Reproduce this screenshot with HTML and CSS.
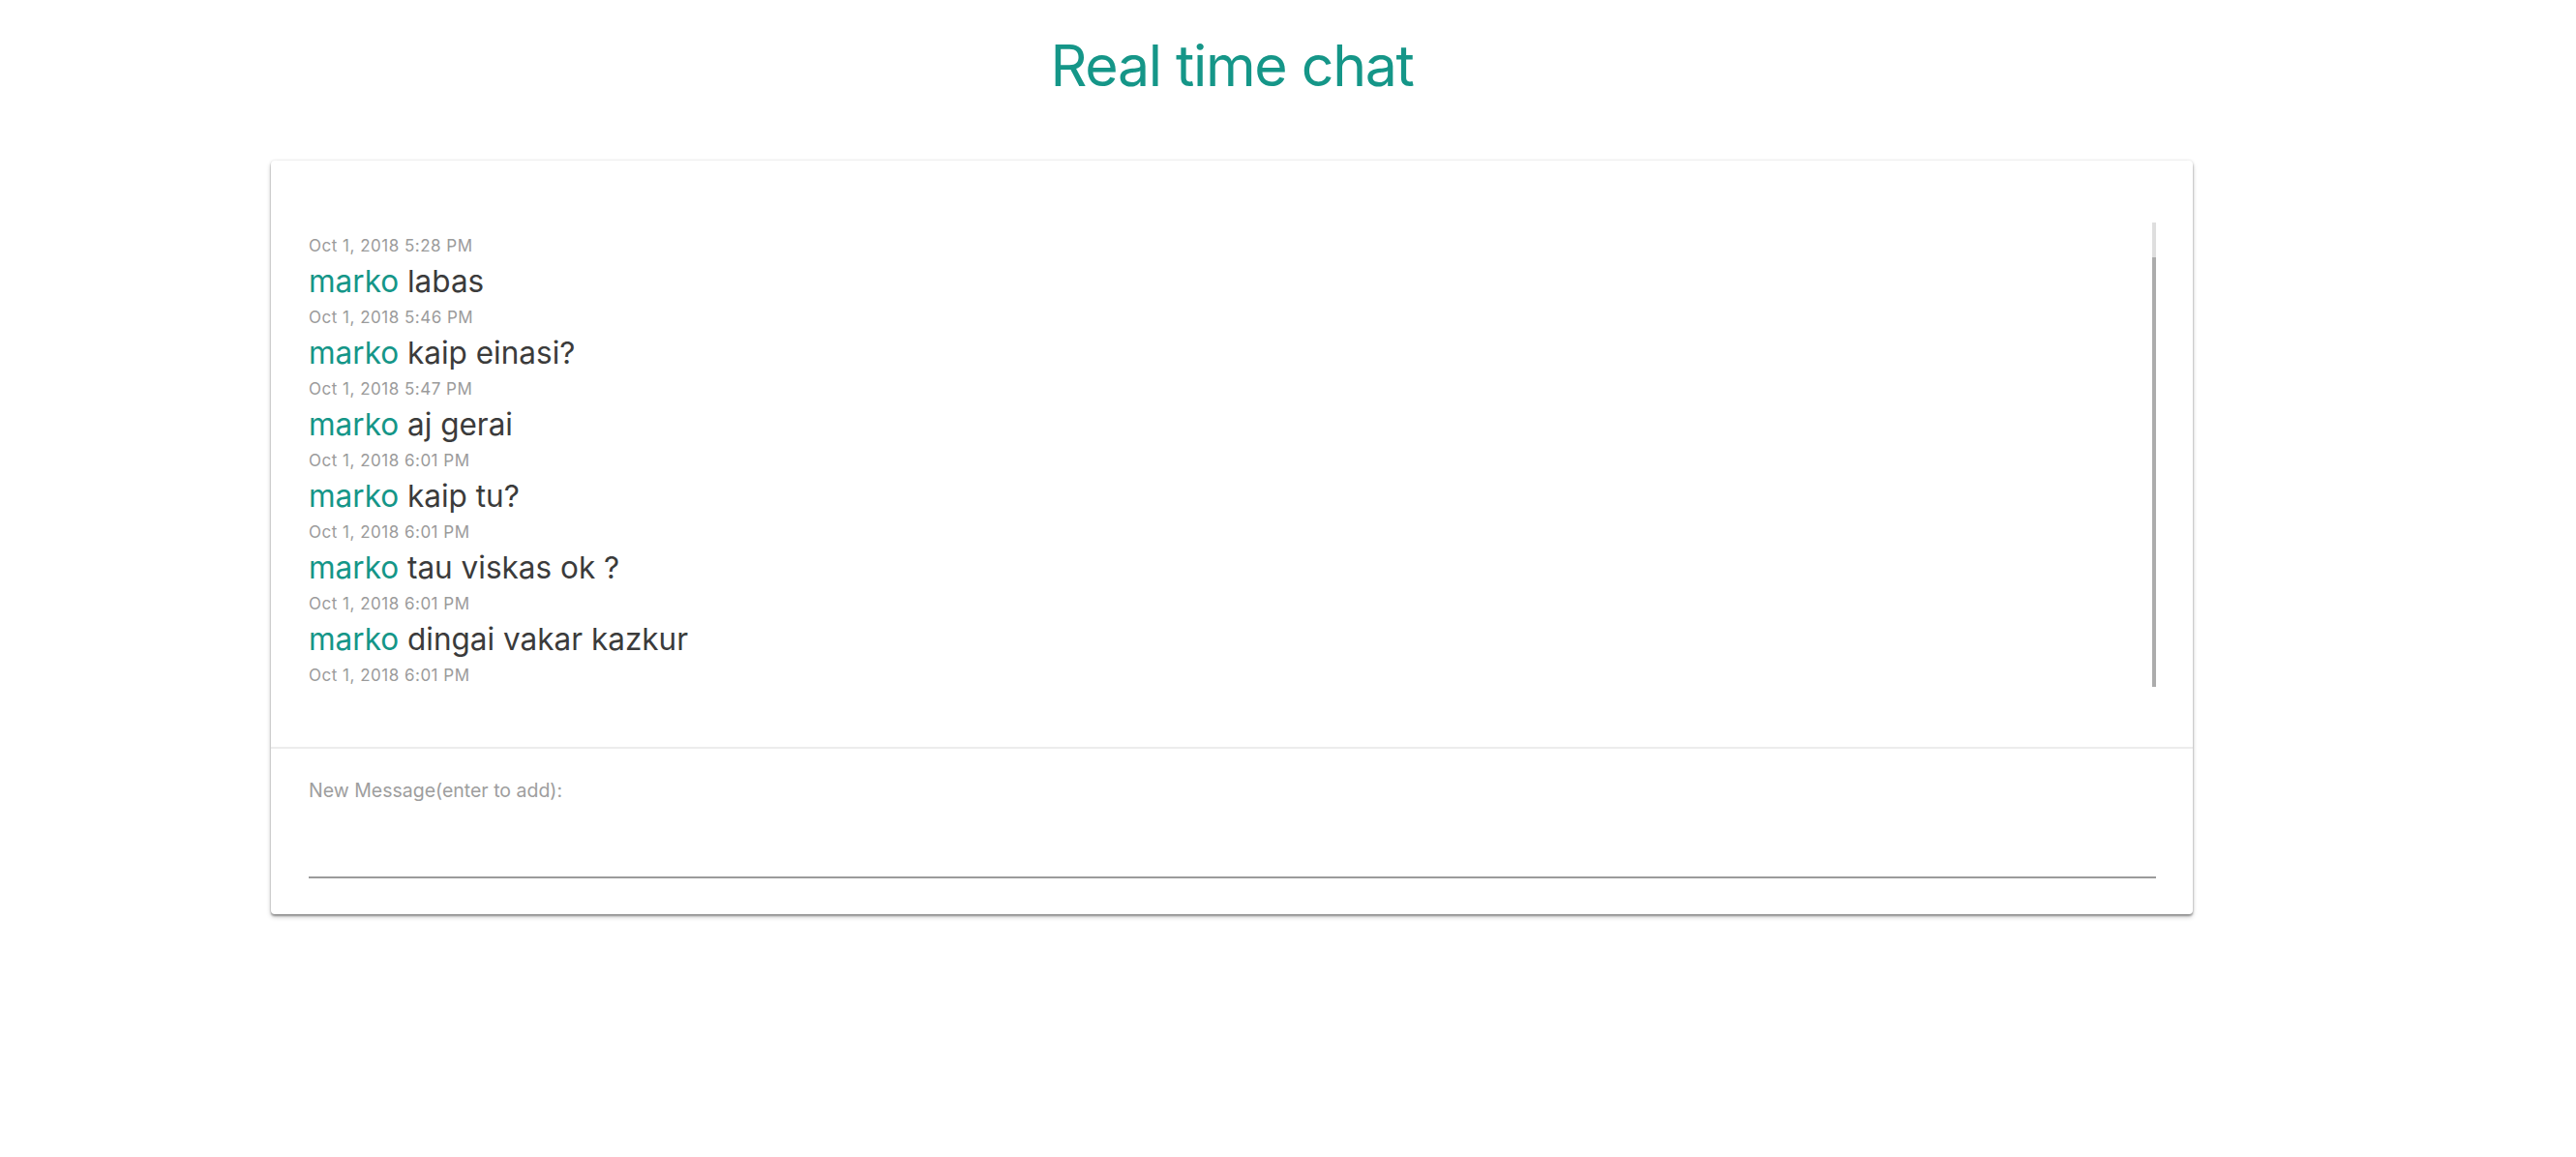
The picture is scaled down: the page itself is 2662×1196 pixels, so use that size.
FILE: index.html
```html
<!DOCTYPE html>
<html lang="en">
<head>
<meta charset="utf-8">
<title>Real time chat</title>
<link rel="stylesheet" href="styles.css">
</head>
<body>
<div class="page">
  <h1 class="title">Real time chat</h1>
  <div class="card">
    <div class="messages-section">
      <div class="messages">
        <div class="time">Oct 1, 2018 5:28 PM</div>
        <div class="message">
          <div class="line"><span class="user">marko</span> <span class="text">labas</span></div>
          <div class="time">Oct 1, 2018 5:46 PM</div>
        </div>
        <div class="message">
          <div class="line"><span class="user">marko</span> <span class="text">kaip einasi?</span></div>
          <div class="time">Oct 1, 2018 5:47 PM</div>
        </div>
        <div class="message">
          <div class="line"><span class="user">marko</span> <span class="text">aj gerai</span></div>
          <div class="time">Oct 1, 2018 6:01 PM</div>
        </div>
        <div class="message">
          <div class="line"><span class="user">marko</span> <span class="text">kaip tu?</span></div>
          <div class="time">Oct 1, 2018 6:01 PM</div>
        </div>
        <div class="message">
          <div class="line"><span class="user">marko</span> <span class="text">tau viskas ok ?</span></div>
          <div class="time">Oct 1, 2018 6:01 PM</div>
        </div>
        <div class="message">
          <div class="line"><span class="user">marko</span> <span class="text">dingai vakar kazkur</span></div>
          <div class="time">Oct 1, 2018 6:01 PM</div>
        </div>
        <div class="scrollbar"><div class="scrollbar-thumb"></div></div>
      </div>
    </div>
    <div class="composer">
      <label class="label" for="msg">New Message(enter to add):</label>
      <input class="input" id="msg" type="text">
    </div>
  </div>
</div>
</body>
</html>
```

FILE: styles.css
```css
html, body {
  margin: 0;
  padding: 0;
  background: #ffffff;
}

body {
  font-family: Inter, "Noto Sans", "Liberation Sans", sans-serif;
}

.page {
  width: 2546px;
  padding-bottom: 60px;
}

.title {
  margin: 0;
  padding-top: 32px;
  font-size: 59px;
  line-height: 72px;
  letter-spacing: -1.3px;
  font-weight: 400;
  color: #159688;
  text-align: center;
}

.card {
  width: 1986px;
  margin: 62px auto 0;
  background: #fff;
  border-radius: 4px;
  box-shadow: 0 2px 2px rgba(0, 0, 0, 0.3), 0 3px 5px rgba(0, 0, 0, 0.2), 0 0 3px rgba(0, 0, 0, 0.12);
}

.messages-section {
  padding: 64px 38px 62px 39px;
  border-bottom: 2px solid #ececec;
}

.messages {
  position: relative;
  height: 480px;
  box-sizing: border-box;
  padding-top: 13px;
}

.scrollbar {
  position: absolute;
  top: 0;
  right: 0;
  bottom: 0;
  width: 4px;
  background: #dedede;
  display: flex;
  flex-direction: column;
  justify-content: flex-end;
}

.scrollbar-thumb {
  height: 444px;
  background: #acacac;
}

.message .line {
  font-size: 31.5px;
  line-height: 52px;
  color: #3b3b3b;
  white-space: nowrap;
}

.user {
  color: #159688;
}

.time {
  font-size: 17px;
  line-height: 22px;
  color: #9b9b9b;
  letter-spacing: 0.5px;
}

.composer {
  padding: 31px 38px 37px 39px;
}

.label {
  display: block;
  font-size: 19.5px;
  line-height: 24px;
  color: #9e9e9e;
}

.input {
  display: block;
  width: 100%;
  height: 79px;
  box-sizing: border-box;
  border: 0;
  border-bottom: 2px solid #9b9b9b;
  padding: 0;
  margin: 0;
  outline: none;
  background: transparent;
  font: inherit;
  font-size: 32px;
  color: #373737;
}
```
